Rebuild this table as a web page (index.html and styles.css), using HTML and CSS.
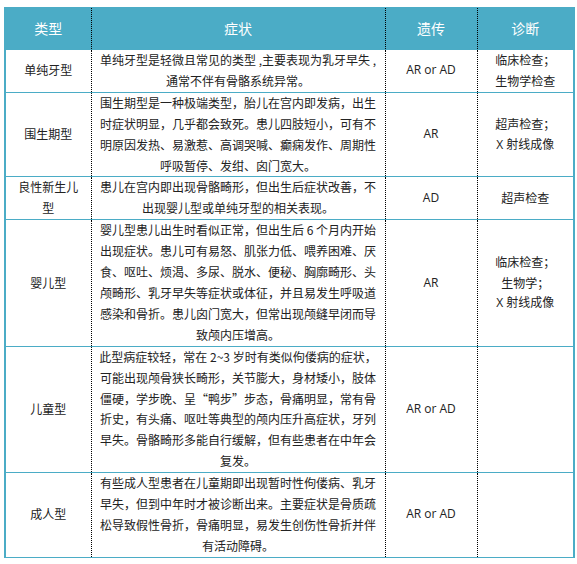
FILE: index.html
```html
<!DOCTYPE html>
<html lang="zh-CN">
<head>
<meta charset="utf-8">
<title>低磷酸酯酶症分型</title>
<link rel="stylesheet" href="styles.css">
</head>
<body>
<div class="page">
<table class="grid">
  <colgroup>
    <col class="c-type">
    <col class="c-sym">
    <col class="c-gen">
    <col class="c-diag">
  </colgroup>
  <thead>
    <tr>
      <th>类型</th>
      <th>症状</th>
      <th>遗传</th>
      <th>诊断</th>
    </tr>
  </thead>
  <tbody>
    <tr>
      <td>单纯牙型</td>
      <td class="sym">单纯牙型是轻微且常见的类型 ,主要表现为乳牙早失 ,通常不伴有骨骼系统异常。</td>
      <td class="gen">AR or AD</td>
      <td><span class="ln">临床检查；</span><span class="ln">生物学检查</span></td>
    </tr>
    <tr>
      <td>围生期型</td>
      <td class="sym">围生期型是一种极端类型，胎儿在宫内即发病，出生时症状明显，几乎都会致死。患儿四肢短小，可有不明原因发热、易激惹、高调哭喊、癫痫发作、周期性呼吸暂停、发绀、囟门宽大。</td>
      <td class="gen">AR</td>
      <td><span class="ln">超声检查；</span><span class="ln gen">X 射线成像</span></td>
    </tr>
    <tr>
      <td>良性新生儿型</td>
      <td class="sym">患儿在宫内即出现骨骼畸形，但出生后症状改善，不出现婴儿型或单纯牙型的相关表现。</td>
      <td class="gen">AD</td>
      <td>超声检查</td>
    </tr>
    <tr>
      <td>婴儿型</td>
      <td class="sym">婴儿型患儿出生时看似正常，但出生后 6 个月内开始出现症状。患儿可有易怒、肌张力低、喂养困难、厌食、呕吐、烦渴、多尿、脱水、便秘、胸廓畸形、头颅畸形、乳牙早失等症状或体征，并且易发生呼吸道感染和骨折。患儿囟门宽大，但常出现颅缝早闭而导致颅内压增高。</td>
      <td class="gen">AR</td>
      <td><span class="ln">临床检查；</span><span class="ln">生物学；</span><span class="ln gen">X 射线成像</span></td>
    </tr>
    <tr>
      <td>儿童型</td>
      <td class="sym">此型病症较轻，常在 2~3 岁时有类似佝偻病的症状，可能出现颅骨狭长畸形，关节膨大，身材矮小，肢体僵硬，学步晚、呈“鸭步”步态，骨痛明显，常有骨折史，有头痛、呕吐等典型的颅内压升高症状，牙列早失。骨骼畸形多能自行缓解，但有些患者在中年会复发。</td>
      <td class="gen">AR or AD</td>
      <td></td>
    </tr>
    <tr>
      <td>成人型</td>
      <td class="sym">有些成人型患者在儿童期即出现暂时性佝偻病、乳牙早失，但到中年时才被诊断出来。主要症状是骨质疏松导致假性骨折，骨痛明显，易发生创伤性骨折并伴有活动障碍。</td>
      <td class="gen">AR or AD</td>
      <td></td>
    </tr>
  </tbody>
</table>
</div>
</body>
</html>
```

FILE: styles.css
```css
html, body {
  margin: 0;
  padding: 0;
  background: #ffffff;
}

body {
  font-family: "Noto Sans CJK SC", "Noto Sans", sans-serif;
  color: #222222;
}

.page {
  padding: 7px 4px 0 4px;
}

.grid {
  border-collapse: collapse;
  table-layout: fixed;
  width: 569px;
  font-size: 12px;
}

.c-type { width: 86px; }
.c-sym { width: 294px; }
.c-gen { width: 92px; }
.c-diag { width: 97px; }

.grid th,
.grid td {
  border-top: 1.5px solid #4bacc6;
  border-bottom: 1.5px solid #4bacc6;
  border-left: 1px dotted #000000;
  border-right: 1px dotted #000000;
  text-align: center;
  vertical-align: middle;
  padding: 0 7px;
  line-height: 20.9px;
}

.grid th:first-child,
.grid td:first-child {
  border-left: 2px solid #4bacc6;
}

.grid th:last-child,
.grid td:last-child {
  border-right: 2px solid #4bacc6;
}

.grid th {
  background: #4bacc6;
  color: #ffffff;
  font-weight: normal;
  font-size: 14px;
  height: 41px;
}

.grid td.sym {
  padding: 0 5px;
}

.gen {
  font-family: "Open Sans", "Noto Sans CJK SC", sans-serif;
}

.ln {
  display: block;
}
```
